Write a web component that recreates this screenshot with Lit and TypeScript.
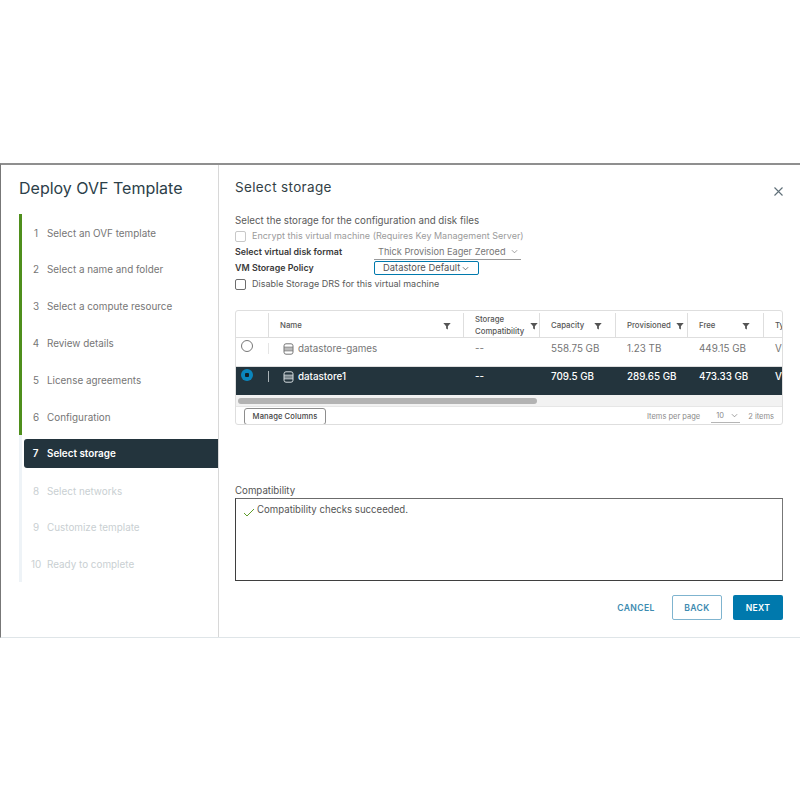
import { LitElement, html, css } from "lit";
import { customElement } from "lit/decorators.js";

const steps = [
  "Select an OVF template", "Select a name and folder", "Select a compute resource", "Review details",
  "License agreements", "Configuration", "Select storage", "Select networks", "Customize template", "Ready to complete",
];
const filter = html`<svg class="filter" viewBox="0 0 8 8"><path d="M0.3 1h7.4L4.9 4.2V7.4L3.1 6.6V4.2Z" fill="currentColor"/></svg>`;
const chevron = html`<svg class="chev" viewBox="0 0 8 5"><path d="M1 1l3 3 3-3" fill="none" stroke="currentColor" stroke-width=".8"/></svg>`;
const db = html`<svg class="db" viewBox="0 0 11 12" fill="none" stroke="currentColor" stroke-width="1"><rect x="1" y=".8" width="9" height="10.4" rx="2"/><path d="M1 4.2h9M1 6h9M1 7.8h9"/></svg>`;

@customElement("app-root")
export class AppRoot extends LitElement {
  static styles = css`
    :host { display: block; width: 800px; height: 800px; background: #fff; font-family: Inter, "Open Sans", sans-serif; padding-top: 163px; box-sizing: border-box; color: #565656; }
    * { box-sizing: border-box; }
    .dialog { display: flex; height: 475px; border-top: 2px solid #8f8f8f; border-left: 1px solid #777; border-bottom: 1px solid #dfe5e8; }
    .side { width: 218px; border-right: 1px solid #d8d8d8; flex: none; padding: 12px 0 0 18px; }
    .side h1 { margin: 0 0 15px; font-size: 16px; line-height: 22px; font-weight: 400; color: #2c4049; white-space: nowrap; }
    .steps { display: flex; flex-direction: column; width: 199px; }
    .step { height: 36.85px; display: flex; align-items: center; font-size: 9.9px; color: #767676; border-left: 3px solid #4f8f1c; white-space: nowrap; padding-top: 0.4px; }
    .step .n { width: 22px; margin-left: 3px; text-align: center; flex: none; }
    .step.future { color: #c9cfd2; border-left-color: #eef3f7; }
    .step.active { border-left-color: #eef3f7; background: #fff; padding: 4px 0; align-items: stretch; }
    .step.active .pill { margin-left: 2px; flex: 1; display: flex; align-items: center; background: #23343d; color: #fff; border-radius: 3px 0 0 3px; font-weight: 600; }
    .step.active .n { width: 23px; margin-left: 0; }
    .main { flex: 1; min-width: 0; display: flex; flex-direction: column; padding: 12px 17px 0 16px; }
    .head { display: flex; justify-content: space-between; align-items: flex-start; height: 35.5px; flex: none; }
    .head h2 { margin: 0; font-size: 13.5px; line-height: 20px; font-weight: 400; color: #333f46; letter-spacing: .35px; }
    .close { width: 11px; height: 11px; margin: 9px -1px 0 0; color: #5f6f78; }
    .line { font-size: 9.4px; line-height: 15.9px; height: 15.9px; display: flex; align-items: center; white-space: nowrap; color: #5a5a5a; }
    .lead { font-size: 9.75px; }
    .small { font-size: 9px; }
    .check { width: 11px; height: 11px; border: 1px solid #6d6d6d; border-radius: 2px; margin-right: 6px; flex: none; }
    .dis { color: #9b9b9b; }
    .dis .check { border-color: #c8c8c8; }
    .lab { font-weight: 600; color: #3a3a3a; width: 139px; font-size: 8.9px; }
    .select { width: 147px; height: 15px; border-bottom: 1px solid #9a9a9a; padding-left: 4px; color: #777; display: flex; align-items: center; gap: 5px; font-size: 9.2px; }
    .chev { width: 7px; height: 5px; color: #7a7a7a; flex: none; }
    .policy { width: 105px; height: 14px; border: 1px solid #0079ad; border-radius: 2px; padding-left: 8px; display: flex; align-items: center; gap: 2px; color: #555; }
    .policy .chev { color: #444; }
    .grid { margin-top: 18px; height: 115px; width: 548px; flex: none; border: 1px solid #dedede; border-radius: 3px; overflow: hidden; display: flex; flex-direction: column; }
    .row { display: grid; grid-template-columns: 32px 195px 76px 76px 72px 76px 60px; flex: none; white-space: nowrap; }
    .hdr { height: 27px; border-bottom: 1px solid #dedede; font-size: 7.8px; font-weight: 500; color: #565656; }
    .hdr > div { display: flex; align-items: center; justify-content: space-between; border-left: 1px solid #dedede; padding: 0 1px 0 11px; margin: 2px 0 2px; }
    .hdr > div:first-child { border-left: 0; }
    .hdr .wrap { line-height: 12px; white-space: normal; }
    .filter { display: block; width: 8px; height: 8px; color: #555; flex: none; margin-top: 2px; }
    .name-f { margin-right: 11px; }
    .cap-f { margin-right: 12px; }
    .free-f { margin-right: 12px; }
    .prov-f { margin-right: 2px; }
    .body { height: 29px; font-size: 9.8px; color: #757575; border-bottom: 1px solid #dedede; }
    .body > div { padding: 3px 0 0 12px; line-height: 15px; }
    .body .radio-cell { padding: 1px 0 0 5px; }
    .body .namec { display: flex; align-items: flex-start; gap: 3px; padding: 0 0 0 14px; border-left: 1px solid #e5e5e5; height: 11px; margin-top: 5px; line-height: 11px; }
    .db { width: 11px; height: 12px; flex: none; color: #777; margin-right: 1px; }
    .radio { display: block; width: 12px; height: 12px; border: 1px solid #777; border-radius: 50%; margin-top: 1px; }
    .sel { height: 28px; background: #23343d; color: #fff; border-bottom: 0; font-weight: 500; }
    .sel > div { padding-top: 2px; }
    .sel .namec { margin-top: 4px; padding-top: 0; }
    .sel .db { color: #d5dbde; }
    .sel .namec { border-left-color: #aab3b7; }
    .sel .radio { border: 0; background: radial-gradient(circle, #111f26 0 2px, #0a86bd 2.5px); }
    .bar { height: 12px; background: #f2f2f2; padding: 3px 0 0 2px; flex: none; border-bottom: 1px solid #e6e6e6; }
    .thumb { width: 299px; height: 6px; border-radius: 3px; background: #b3b3b3; }
    .foot { flex: 1; display: flex; align-items: center; padding: 1px 8px 0; font-size: 7.5px; color: #8b8b8b; white-space: nowrap; }
    .mc { height: 17px; width: 82px; border: 1px solid #8d8d8d; border-radius: 3px; display: flex; align-items: center; justify-content: center; color: #444; font-size: 7.6px; font-weight: 500; letter-spacing: .1px; margin-right: auto; }
    .pp { margin-left: 11px; width: 29px; border-bottom: 1px solid #b5b5b5; height: 14px; display: flex; align-items: center; gap: 7px; padding-left: 5px; margin-right: 8px; }
    .cl { font-size: 9.7px; line-height: 12px; margin-top: 60px; color: #555; }
    .box { height: 83px; flex: none; margin-top: 1px; border: 1px solid #3f3f3f; border-top-color: #6b6b6b; border-right-color: #777; padding: 3px 7px; display: flex; align-items: flex-start; gap: 2px; font-size: 9.65px; line-height: 15px; color: #555; }
    .ok { width: 12px; height: 9px; margin-top: 6px; color: #5e9c2c; flex: none; }
    .actions { display: flex; justify-content: flex-end; align-items: center; gap: 11px; margin-top: 14px; font-size: 8.6px; font-weight: 600; letter-spacing: .35px; }
    .btn { height: 25px; display: flex; align-items: center; justify-content: center; border-radius: 2px; color: #3d8bb0; width: 50px; padding-top: 1px; }
    .back { border: 1px solid #7fb4cf; }
    .next { background: #0079ad; color: #fff; }
  `;

  render() {
    return html`
      <div class="dialog">
        <aside class="side">
          <h1>Deploy OVF Template</h1>
          <div class="steps">
            ${steps.map((s, i) => i === 6
              ? html`<div class="step active"><div class="pill"><span class="n">${i + 1}</span>${s}</div></div>`
              : html`<div class="step ${i > 6 ? "future" : ""}"><span class="n">${i + 1}</span>${s}</div>`)}
          </div>
        </aside>
        <main class="main">
          <div class="head">
            <h2>Select storage</h2>
            <svg class="close" viewBox="0 0 11 11"><path d="M1.5 1.5l8 8M9.5 1.5l-8 8" stroke="currentColor" stroke-width="1.1" fill="none"/></svg>
          </div>
          <div class="line lead">Select the storage for the configuration and disk files</div>
          <div class="line dis small"><span class="check"></span>Encrypt this virtual machine (Requires Key Management Server)</div>
          <div class="line"><span class="lab">Select virtual disk format</span><span class="select">Thick Provision Eager Zeroed ${chevron}</span></div>
          <div class="line"><span class="lab">VM Storage Policy</span><span class="policy">Datastore Default ${chevron}</span></div>
          <div class="line small"><span class="check"></span>Disable Storage DRS for this virtual machine</div>

          <div class="grid">
            <div class="row hdr">
              <div></div>
              <div>Name <span class="name-f">${filter}</span></div>
              <div><span class="wrap">Storage Compatibility</span>${filter}</div>
              <div>Capacity <span class="cap-f">${filter}</span></div>
              <div>Provisioned <span class="prov-f">${filter}</span></div>
              <div>Free <span class="free-f">${filter}</span></div>
              <div>Type</div>
            </div>
            <div class="row body">
              <div class="radio-cell"><span class="radio"></span></div>
              <div class="namec">${db}<span>datastore-games</span></div>
              <div>--</div><div>558.75 GB</div><div>1.23 TB</div><div>449.15 GB</div><div>VMFS</div>
            </div>
            <div class="row body sel">
              <div class="radio-cell"><span class="radio"></span></div>
              <div class="namec">${db}<span>datastore1</span></div>
              <div>--</div><div>709.5 GB</div><div>289.65 GB</div><div>473.33 GB</div><div>VMFS</div>
            </div>
            <div class="bar"><div class="thumb"></div></div>
            <div class="foot">
              <span class="mc">Manage Columns</span>
              <span>Items per page</span>
              <span class="pp">10 ${chevron}</span>
              <span>2 items</span>
            </div>
          </div>

          <div class="cl">Compatibility</div>
          <div class="box">
            <svg class="ok" viewBox="0 0 12 9"><path d="M1 5l3 3 7-7" fill="none" stroke="currentColor" stroke-width="1"/></svg>
            Compatibility checks succeeded.
          </div>
          <div class="actions">
            <span class="btn">CANCEL</span>
            <span class="btn back">BACK</span>
            <span class="btn next">NEXT</span>
          </div>
        </main>
      </div>
    `;
  }
}
